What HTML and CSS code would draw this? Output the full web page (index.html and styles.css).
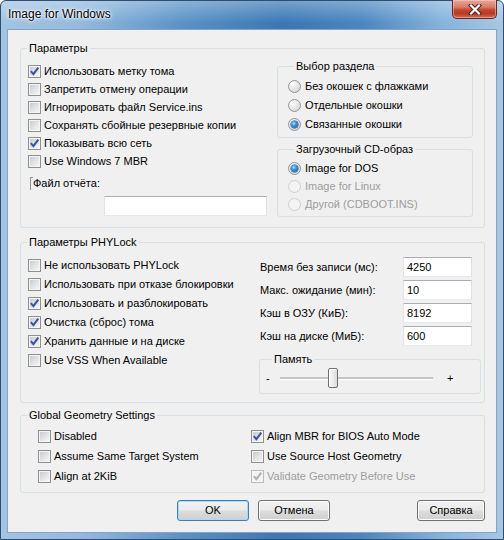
FILE: index.html
```html
<!DOCTYPE html>
<html lang="ru">
<head>
    <meta charset="utf-8" />
    <title>Image for Windows</title>
    <link rel="stylesheet" href="styles.css">
</head>
<body>
    <div class="window">
        <div class="titlebar">
            <span class="title">Image for Windows</span>
            <span class="close-btn">
                <svg width="14" height="11" viewBox="0 0 14 11">
                    <path d="M3 1.5l8 8M11 1.5l-8 8" fill="none" stroke="#4a2119" stroke-width="4.2" stroke-linecap="square"/>
                    <path d="M3 1.5l8 8M11 1.5l-8 8" fill="none" stroke="#fff" stroke-width="2.2" stroke-linecap="square"/>
                </svg>
            </span>
        </div>

        <div class="client">
            <!-- general options -->
            <fieldset class="group main-group">
                <legend>Параметры</legend>
                <div class="main-cols">
                    <div class="options">
                        <div class="chk checked"><span class="box"><svg viewBox="0 0 11 11" width="11" height="11"><path d="M1.8 5.2l2.6 3 4.9-6.6" fill="none" stroke="#3e52a0" stroke-width="2"/></svg></span>Использовать метку тома</div>
                        <div class="chk"><span class="box"></span>Запретить отмену операции</div>
                        <div class="chk"><span class="box"></span>Игнорировать файл Service.ins</div>
                        <div class="chk"><span class="box"></span>Сохранять сбойные резервные копии</div>
                        <div class="chk checked"><span class="box"><svg viewBox="0 0 11 11" width="11" height="11"><path d="M1.8 5.2l2.6 3 4.9-6.6" fill="none" stroke="#3e52a0" stroke-width="2"/></svg></span>Показывать всю сеть</div>
                        <div class="chk"><span class="box"></span>Use Windows 7 MBR</div>
                        <div class="log-label"><span class="bracket"></span>Файл отчёта:</div>
                        <span class="field log-field"></span>
                    </div>

                    <div class="side">
                        <fieldset class="group sub sub-part">
                            <legend>Выбор раздела</legend>
                            <div class="rad"><span class="radio"></span>Без окошек с флажками</div>
                            <div class="rad"><span class="radio"></span>Отдельные окошки</div>
                            <div class="rad"><span class="radio on"></span>Связанные окошки</div>
                        </fieldset>
                        <fieldset class="group sub sub-boot">
                            <legend>Загрузочный CD-образ</legend>
                            <div class="rad"><span class="radio on"></span>Image for DOS</div>
                            <div class="rad disabled"><span class="radio"></span>Image for Linux</div>
                            <div class="rad disabled"><span class="radio"></span>Другой (CDBOOT.INS)</div>
                        </fieldset>
                    </div>
                </div>
            </fieldset>

            <!-- PHYLock -->
            <fieldset class="group phylock">
                <legend>Параметры PHYLock</legend>
                <div class="phy-cols">
                    <div class="options">
                        <div class="chk"><span class="box"></span>Не использовать PHYLock</div>
                        <div class="chk"><span class="box"></span>Использовать при отказе блокировки</div>
                        <div class="chk checked"><span class="box"><svg viewBox="0 0 11 11" width="11" height="11"><path d="M1.8 5.2l2.6 3 4.9-6.6" fill="none" stroke="#3e52a0" stroke-width="2"/></svg></span>Использовать и разблокировать</div>
                        <div class="chk checked"><span class="box"><svg viewBox="0 0 11 11" width="11" height="11"><path d="M1.8 5.2l2.6 3 4.9-6.6" fill="none" stroke="#3e52a0" stroke-width="2"/></svg></span>Очистка (сброс) тома</div>
                        <div class="chk checked"><span class="box"><svg viewBox="0 0 11 11" width="11" height="11"><path d="M1.8 5.2l2.6 3 4.9-6.6" fill="none" stroke="#3e52a0" stroke-width="2"/></svg></span>Хранить данные и на диске</div>
                        <div class="chk"><span class="box"></span>Use VSS When Available</div>
                    </div>

                    <div class="phy-right">
                        <div class="num-row"><span>Время без записи (мс):</span><span class="field num">4250</span></div>
                        <div class="num-row"><span>Макс. ожидание (мин):</span><span class="field num">10</span></div>
                        <div class="num-row"><span>Кэш в ОЗУ (КиБ):</span><span class="field num">8192</span></div>
                        <div class="num-row"><span>Кэш на диске (МиБ):</span><span class="field num">600</span></div>

                        <fieldset class="group sub memory">
                            <legend>Память</legend>
                            <div class="slider">
                                <span class="minus">-</span>
                                <span class="track"><span class="thumb"></span></span>
                                <span class="plus">+</span>
                            </div>
                        </fieldset>
                    </div>
                </div>
            </fieldset>

            <!-- geometry -->
            <fieldset class="group geometry">
                <legend>Global Geometry Settings</legend>
                <div class="geo-grid">
                    <div class="chk"><span class="box"></span>Disabled</div>
                    <div class="chk checked"><span class="box"><svg viewBox="0 0 11 11" width="11" height="11"><path d="M1.8 5.2l2.6 3 4.9-6.6" fill="none" stroke="#3e52a0" stroke-width="2"/></svg></span>Align MBR for BIOS Auto Mode</div>
                    <div class="chk"><span class="box"></span>Assume Same Target System</div>
                    <div class="chk"><span class="box"></span>Use Source Host Geometry</div>
                    <div class="chk"><span class="box"></span>Align at 2KiB</div>
                    <div class="chk checked disabled"><span class="box"><svg viewBox="0 0 11 11" width="11" height="11"><path d="M1.8 5.2l2.6 3 4.9-6.6" fill="none" stroke="#b0b0b0" stroke-width="2"/></svg></span>Validate Geometry Before Use</div>
                </div>
            </fieldset>

            <div class="buttons">
                <button class="btn btn-default">OK</button>
                <button class="btn">Отмена</button>
                <button class="btn btn-help">Справка</button>
            </div>
        </div>
    </div>
</body>
</html>
```

FILE: styles.css
```css
* {
    margin: 0;
    padding: 0;
    box-sizing: border-box;
}

body {
    width: 504px;
    height: 540px;
    overflow: hidden;
    font-family: "Liberation Sans", Arial, sans-serif;
    font-size: 11px;
    line-height: 13px;
    color: #000;
    background: #fff;
}

/* aero frame */
.window {
    width: 504px;
    height: 540px;
    border: 1px solid #2f4d70;
    border-radius: 6px 6px 0 0;
    padding: 0 6px;
    display: flex;
    flex-direction: column;
    background:
        linear-gradient(180deg, rgba(255, 255, 255, 0.3) 0, rgba(255, 255, 255, 0) 22px),
        linear-gradient(90deg, #a3c4e3 0%, #93bade 16%, #5a92c7 36%, #3a77b3 56%, #4a86c0 72%, #86b3dc 88%, #a6c7e5 100%);
}

.titlebar {
    height: 28px;
    display: flex;
    justify-content: space-between;
    align-items: flex-start;
}

.title {
    margin: 6px 0 0 1px;
    font-size: 12px;
    line-height: 15px;
    text-shadow: 0 0 5px #fff, 0 0 3px #fff, 0 0 2px #fff;
}

.close-btn {
    width: 45px;
    height: 19px;
    margin-top: -1px;
    display: flex;
    align-items: center;
    justify-content: center;
    border: 1px solid #5c2a22;
    border-top: none;
    border-radius: 0 0 5px 5px;
    background: linear-gradient(180deg, #e8a898 0%, #d77a66 40%, #c5452f 55%, #b93a25 75%, #d86a4f 100%);
    box-shadow: inset 0 0 0 1px rgba(255, 220, 210, 0.45);
}

.close-btn svg {
    display: block;
}

.client {
    width: 490px;
    height: 504px;
    border: 1px solid #8aa2bd;
    background: #f0f0f0;
}

/* group boxes */
.group {
    border: 1px solid #d5dfe5;
    border-radius: 3px;
    min-inline-size: 0;
}

.group legend {
    margin-left: 6px;
    padding: 0 2px;
    line-height: 13px;
}

.client > .group {
    margin-left: 12px;
    width: 465px;
}

.main-group {
    margin-top: 12px;
    padding-bottom: 10px;
}

.main-cols {
    display: grid;
    grid-template-columns: 1fr 196px;
    padding: 0 11px 0 7px;
}

.main-cols .options {
    padding-top: 7px;
}

.main-group .chk {
    height: 18px;
}

.chk {
    display: flex;
    align-items: center;
}

.box {
    width: 13px;
    height: 13px;
    flex: none;
    margin-right: 3px;
    border: 1px solid #8e8f8f;
    background: linear-gradient(135deg, #c3c7cc 0%, #e2e4e7 55%, #f8f8f8 100%);
    box-shadow: inset 0 0 0 1px #f4f4f4;
}

.box svg {
    display: block;
}

.disabled {
    color: #9d9d9d;
}

.disabled .box {
    border-color: #bcbcbc;
    background: #f4f4f4;
}

.log-label {
    display: flex;
    align-items: center;
    height: 18px;
    margin-top: 4px;
}

.bracket {
    width: 3px;
    height: 13px;
    margin-left: 2px;
    border-left: 1px solid #8e8f8f;
    border-top: 1px solid #8e8f8f;
}

.field {
    display: block;
    height: 20px;
    padding-left: 3px;
    line-height: 18px;
    background: #fff;
    border: 1px solid;
    border-color: #abadb3 #dbdfe6 #e3e9ef #e2e3ea;
}

.log-field {
    width: 163px;
    margin: 4px 0 0 76px;
}

.side {
    margin-top: 5px;
}

.sub legend {
    margin-left: 6px;
}

.sub-part {
    padding: 4px 0 3px 10px;
}

.sub-part .rad {
    height: 19px;
}

.sub-boot {
    margin-top: 5px;
    padding: 3px 0 3px 10px;
}

.sub-boot .rad {
    height: 18px;
}

.rad {
    display: flex;
    align-items: center;
}

.radio {
    position: relative;
    width: 13px;
    height: 13px;
    flex: none;
    margin-right: 4px;
    border-radius: 50%;
    border: 1px solid #959595;
    background: radial-gradient(circle at 35% 30%, #ffffff 0, #ececec 35%, #cfcfcf 100%);
}

.radio.on::after {
    content: "";
    position: absolute;
    left: 2px;
    top: 2px;
    width: 7px;
    height: 7px;
    border-radius: 50%;
    background: radial-gradient(circle at 40% 35%, #b6e2ff 0, #3a97e0 35%, #10539f 100%);
    box-shadow: 0 0 0 0.5px #1c4a80;
}

.disabled .radio {
    border-color: #cfcfcf;
    background: #f4f4f4;
}

/* PHYLock */
.phylock {
    margin-top: 8px;
    padding-bottom: 8px;
}

.phy-cols {
    display: grid;
    grid-template-columns: 1fr 222px;
    padding: 0 3px 0 7px;
}

.phy-cols .options {
    padding-top: 7px;
}

.phylock .chk {
    height: 19px;
}

.phy-right {
    padding-top: 8px;
    display: flex;
    flex-direction: column;
    gap: 3px;
}

.num-row {
    display: flex;
    align-items: center;
    justify-content: space-between;
    padding: 0 9px 0 1px;
}

.num {
    width: 69px;
}

.memory {
    margin-top: 4px;
    padding: 2px 0 5px 6px;
}

.slider {
    display: flex;
    align-items: center;
    height: 20px;
}

.minus {
    width: 14px;
}

.track {
    position: relative;
    width: 153px;
    height: 3px;
    background: #c4c4c4;
    border-bottom: 1px solid #fff;
}

.thumb {
    position: absolute;
    left: 48px;
    top: -9px;
    width: 10px;
    height: 20px;
    border: 1px solid #707070;
    border-radius: 2px;
    background: linear-gradient(90deg, #fafafa 0%, #ececec 50%, #d9d9d9 100%);
    box-shadow: inset 1px 1px 0 #fff;
}

.plus {
    margin-left: 14px;
}

/* geometry */
.geometry {
    margin-top: 6px;
    padding: 4px 0 6px;
}

.geo-grid {
    display: grid;
    grid-template-columns: 213px 1fr;
    grid-auto-rows: 20px;
    padding-left: 17px;
}

/* dialog buttons */
.buttons {
    display: flex;
    gap: 9px;
    margin-top: 7px;
    padding: 0 11px 0 169px;
}

.btn {
    width: 72px;
    height: 21px;
    font: inherit;
    color: #000;
    border: 1px solid #707070;
    border-radius: 3px;
    background: linear-gradient(180deg, #f2f2f2 0%, #ebebeb 48%, #dddddd 52%, #cfcfcf 100%);
    box-shadow: inset 0 0 0 1px #fcfcfc;
}

.btn-default {
    border-color: #3c7fb1;
    box-shadow: inset 0 0 0 1px #a7dbf6;
}

.btn-help {
    width: 68px;
    margin-left: auto;
}
```
